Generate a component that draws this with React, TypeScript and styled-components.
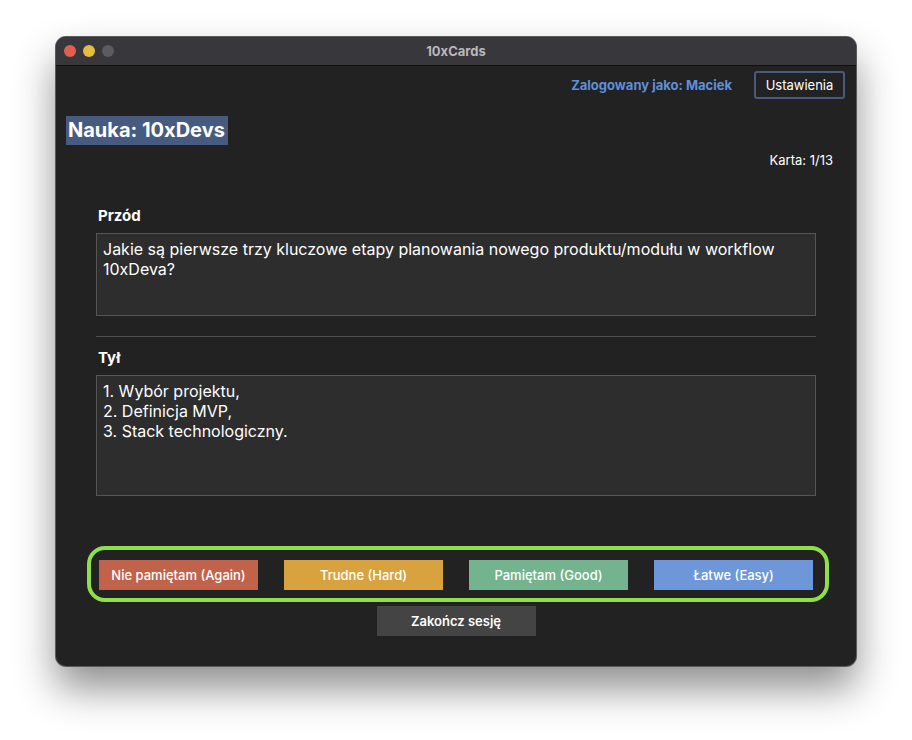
import React from "react";
import styled, { createGlobalStyle } from "styled-components";

const Global = createGlobalStyle`
  html, body { margin: 0; padding: 0; background: #ffffff; }
  body { font-family: Inter, "Noto Sans", "Liberation Sans", sans-serif; -webkit-font-smoothing: antialiased; }
`;

const Stage = styled.div`
  width: 912px;
  height: 740px;
  padding: 37px 0 0 56px;
  box-sizing: border-box;
  background: #ffffff;
`;

const Window = styled.div`
  width: 800px;
  border-radius: 10px;
  overflow: hidden;
  background: #222222;
  box-shadow: 0 0 0 1px #5a5a5a, 0 22px 40px rgba(0, 0, 0, 0.45);
  display: flex;
  flex-direction: column;
`;

const TitleBar = styled.div`
  height: 28px;
  background: #38373c;
  border-bottom: 1px solid #0f0f10;
  display: flex;
  align-items: center;
  position: relative;
  padding-left: 8px;
  gap: 7px;
`;

const Light = styled.span<{ $c: string }>`
  width: 12px;
  height: 12px;
  border-radius: 50%;
  background: ${(p) => p.$c};
`;

const WindowTitle = styled.div`
  position: absolute;
  left: 0;
  right: 0;
  text-align: center;
  font-size: 13px;
  font-weight: 700;
  color: #b9b8bd;
  pointer-events: none;
`;

const Content = styled.div`
  display: flex;
  flex-direction: column;
  padding: 5px 0 30px;
`;

const Header = styled.div`
  display: flex;
  justify-content: flex-end;
  align-items: center;
  gap: 22px;
  padding-right: 11px;
`;

const UserLabel = styled.span`
  color: #5f8fd8;
  font-size: 13px;
  font-weight: 700;
`;

const SettingsButton = styled.button`
  height: 28px;
  width: 91px;
  background: transparent;
  border: 2px solid #4a5a7e;
  border-radius: 3px;
  color: #ffffff;
  font-family: inherit;
  font-size: 13px;
  padding: 0;
`;

const DeckTitle = styled.h1`
  margin: 17px 0 0 10px;
  align-self: flex-start;
  background: #475a7f;
  color: #ffffff;
  font-size: 20px;
  font-weight: 700;
  line-height: 29px;
  padding: 0 3px 0 2px;
`;

const Counter = styled.div`
  align-self: flex-end;
  margin: 8px 23px 0 0;
  color: #ffffff;
  font-size: 13px;
  line-height: 15px;
`;

const Card = styled.div`
  display: flex;
  flex-direction: column;
  padding: 0 40px;
  margin-top: 39px;
`;

const SideLabel = styled.div`
  color: #ffffff;
  font-size: 15px;
  font-weight: 700;
  line-height: 18px;
  padding-left: 2px;
  margin-bottom: 8px;
`;

const SideBox = styled.div<{ $h: number }>`
  height: ${(p) => p.$h}px;
  box-sizing: border-box;
  background: #2d2d2d;
  border: 1px solid #565656;
  color: #ffffff;
  font-size: 16px;
  line-height: 20px;
  padding: 5px 6px;
  white-space: pre-line;
`;

const Divider = styled.hr`
  border: none;
  border-top: 1px solid #515151;
  margin: 20px 0 12px;
  height: 0;
`;

const Grades = styled.div`
  margin: 50px 27px 0 31px;
  border: 4px solid #8fe048;
  border-radius: 18px;
  padding: 10px 12px 8px 8px;
  display: flex;
  gap: 26px;
`;

const GradeButton = styled.button<{ $bg: string }>`
  width: 159px;
  height: 30px;
  border: none;
  padding: 0;
  background: ${(p) => p.$bg};
  color: #ffffff;
  font-family: inherit;
  font-size: 13px;
  font-weight: 500;
`;

const EndButton = styled.button`
  align-self: center;
  margin-top: 4px;
  width: 159px;
  height: 30px;
  border: none;
  background: #444444;
  color: #ffffff;
  font-family: inherit;
  font-size: 13px;
  font-weight: 600;
`;

const grades = [
  { label: "Nie pamiętam (Again)", bg: "#c1634a" },
  { label: "Trudne (Hard)", bg: "#d8a33f" },
  { label: "Pamiętam (Good)", bg: "#73b38e" },
  { label: "Łatwe (Easy)", bg: "#6d97d9" },
];

export default function App() {
  return (
    <Stage>
      <Global />
      <Window>
        <TitleBar>
          <Light $c="#e0604f" />
          <Light $c="#e7bd3f" />
          <Light $c="#5c5b61" />
          <WindowTitle>10xCards</WindowTitle>
        </TitleBar>
        <Content>
          <Header>
            <UserLabel>Zalogowany jako: Maciek</UserLabel>
            <SettingsButton>Ustawienia</SettingsButton>
          </Header>
          <DeckTitle>Nauka: 10xDevs</DeckTitle>
          <Counter>Karta: 1/13</Counter>
          <Card>
            <SideLabel>Przód</SideLabel>
            <SideBox $h={83}>
              Jakie są pierwsze trzy kluczowe etapy planowania nowego produktu/modułu w workflow 10xDeva?
            </SideBox>
            <Divider />
            <SideLabel>Tył</SideLabel>
            <SideBox $h={121}>{"1. Wybór projektu,\n2. Definicja MVP,\n3. Stack technologiczny."}</SideBox>
          </Card>
          <Grades>
            {grades.map((g) => (
              <GradeButton key={g.label} $bg={g.bg}>
                {g.label}
              </GradeButton>
            ))}
          </Grades>
          <EndButton>Zakończ sesję</EndButton>
        </Content>
      </Window>
    </Stage>
  );
}
